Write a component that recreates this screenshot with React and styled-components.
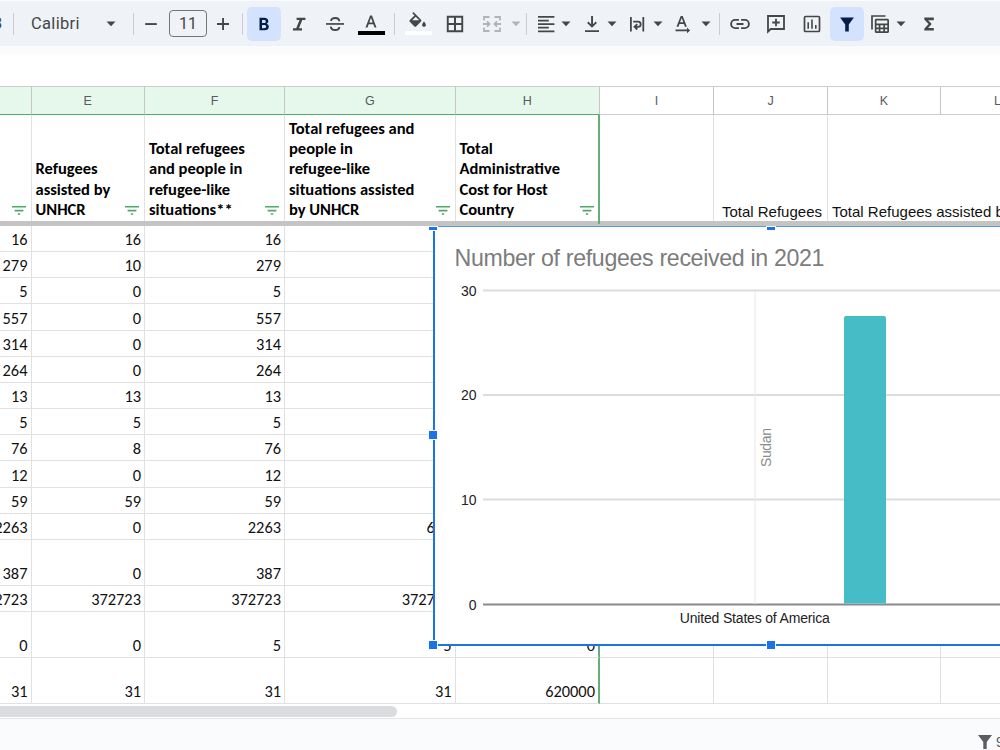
import styled, { createGlobalStyle } from 'styled-components';

const columns = [
  { name: '', width: 31.5, selected: true },
  { name: 'E', width: 113.5, selected: true, title: ['Refugees', 'assisted by', 'UNHCR'] },
  { name: 'F', width: 140, selected: true, title: ['Total refugees', 'and people in', 'refugee-like', 'situations**'] },
  { name: 'G', width: 170.5, selected: true, title: ['Total refugees and', 'people in', 'refugee-like', 'situations assisted', 'by UNHCR'] },
  { name: 'H', width: 144.5, selected: true, last: true, title: ['Total', 'Administrative', 'Cost for Host', 'Country'] },
  { name: 'I', width: 114 },
  { name: 'J', width: 114, text: 'Total Refugees', right: true },
  { name: 'K', width: 113, text: 'Total Refugees assisted by UNHCR', open: true },
  { name: 'L', width: 114 },
];

const SMALL = 26.1667;

const rows = [
  { height: SMALL, cells: ['16', '16', '16'] },
  { height: SMALL, cells: ['279', '10', '279'] },
  { height: SMALL, cells: ['5', '0', '5'] },
  { height: SMALL, cells: ['557', '0', '557'] },
  { height: SMALL, cells: ['314', '0', '314'] },
  { height: SMALL, cells: ['264', '0', '264'] },
  { height: SMALL, cells: ['13', '13', '13'] },
  { height: SMALL, cells: ['5', '5', '5'] },
  { height: SMALL, cells: ['76', '8', '76'] },
  { height: SMALL, cells: ['12', '0', '12'] },
  { height: SMALL, cells: ['59', '59', '59'] },
  { height: SMALL, cells: ['2263', '0', '2263', '600'] },
  { height: 46, cells: ['387', '0', '387'] },
  { height: 26, cells: ['372723', '372723', '372723', '372723'] },
  { height: 46, cells: ['0', '0', '5', '5', '0'] },
  { height: 46, cells: ['31', '31', '31', '31', '620000'] },
];

const ticks = [
  { label: '30', y: 64.5 },
  { label: '20', y: 169 },
  { label: '10', y: 273.5 },
  { label: '0', y: 378.5 },
];

function Caret ({ $muted }) {
  return (
    <CaretIcon $muted={$muted} width='10' height='6' viewBox='0 0 10 6'>
      <path d='M.5.5h9L5 5.3z' />
    </CaretIcon>
  );
}

function Toolbar () {
  return (
    <Bar>
      <Cut>3</Cut>
      <Divider />
      <FontSelect>
        <span>Calibri</span>
        <Caret />
      </FontSelect>
      <Divider />
      <Slot $width={34}>
        <Icon><path d='M6.2 11.1h11.6v1.9H6.2z' /></Icon>
      </Slot>
      <SizeBox>11</SizeBox>
      <Slot $width={32}>
        <Icon><path d='M6 11.1h5.1V6H13v5.1h5V13h-5v5h-1.9v-5H6z' /></Icon>
      </Slot>
      <Divider $after={4} $before={3} />

      <ActiveButton>
        <Icon><path d='M7.500 5.800h4.800c2.400 0 4 1.300 4 3.300 0 1.300-.7 2.200-1.700 2.700 1.300.4 2.200 1.500 2.200 2.900 0 2.300-1.800 3.600-4.300 3.600h-5zm2.500 2.100v3.100h2.100c1 0 1.700-.6 1.700-1.600s-.7-1.500-1.700-1.500zm0 5v3.300h2.300c1.200 0 1.900-.6 1.900-1.700 0-1-.8-1.600-1.900-1.600z' /></Icon>
      </ActiveButton>
      <Slot $width={36}>
        <Icon><path d='M9.600 5.700h8.800V8h-3.100l-3.300 8.300h3V18.600H6v-2.300h3.200L12.500 8H9.600z' /></Icon>
      </Slot>
      <Slot $width={35}>
        <Icon>
          <path d='M3 11.100h18v1.700H3z' />
          <path d='M16.200 9.300C16.200 7.300 14.500 6 12.100 6 9.800 6 8.100 7.200 8.100 8.900M7.800 14.600c.2 2.100 1.900 3.400 4.300 3.400 2.500 0 4.200-1.200 4.200-3.100' fill='none' stroke='currentColor' strokeWidth='1.900' />
        </Icon>
      </Slot>
      <Swatch $color='#000' $left={1}>
        <Icon><path d='M11.100 3.600h1.900l4.500 12h-2l-1.200-3.300H9.700L8.500 15.600h-2zm-.8 7h3.400L12 5.800z' /></Icon>
      </Swatch>
      <Divider $before={5} $after={5} />
      <Swatch $color='#fff'>
        <Icon>
          <path d='M7.500 0 6.300 1.200l2.200 2.200-4.700 4.700c-.5.5-.5 1.200 0 1.700l4.600 4.600c.5.5 1.200.5 1.700 0l4.900-4.900c.5-.5.5-1.200 0-1.700zM9.700 4.700l3.500 3.500H6.200zM18 9.500s-1.900 2.200-1.900 3.400c0 1 .9 1.800 1.900 1.800s1.900-.8 1.900-1.800c0-1.200-1.900-3.400-1.900-3.400z' />
        </Icon>
      </Swatch>
      <Slot $width={38}>
        <Icon><path d='M3.800 3.800v16.400h16.400V3.800zm7.200 14.500H5.700V13H11zm0-7.200H5.700V5.700H11zm7.300 7.200H13V13h5.300zm0-7.200H13V5.700h5.300z' /></Icon>
      </Slot>
      <Slot $width={35} $muted>
        <Icon>
          <path d='M9.500 5H4v3.500M9.500 19H4v-3.500M14.500 5H20v3.500M14.500 19H20v-3.500M3 12h6M21 12h-6M7 9.300 9.600 12 7 14.700M17 9.300 14.400 12l2.600 2.700' fill='none' stroke='currentColor' strokeWidth='1.800' />
        </Icon>
      </Slot>
      <CaretSlot $width={14}><Caret $muted /></CaretSlot>
      <Divider $before={3} $after={7} />

      <Slot $width={24}>
        <Icon><path d='M4 4h16.400v1.800H4zm0 3.700h10.800v1.700H4zm0 3.500h16.400V13H4zm0 3.600h10.800v1.700H4zm0 3.600h16.400v1.800H4z' /></Icon>
      </Slot>
      <CaretSlot $width={16}><Caret /></CaretSlot>
      <Slot $width={28} $left={4}>
        <Icon><path d='M11.100 4H13v8.300l2.700-2.700 1.200 1.300-4.900 4.900-4.900-4.900 1.300-1.300 2.700 2.700zM5 18.300h14v1.800H5z' /></Icon>
      </Slot>
      <CaretSlot $width={12}><Caret /></CaretSlot>
      <Slot $width={38}>
        <Icon>
          <path d='M5.900 5v14.500M18.300 5v14.500M8.200 9.600h4.900a2.500 2.500 0 0 1 0 5.200h-2.500M12.300 12.100l-2.800 2.700 2.800 2.700' fill='none' stroke='currentColor' strokeWidth='1.800' />
        </Icon>
      </Slot>
      <CaretSlot $width={3}><Caret /></CaretSlot>
      <Slot $width={46}>
        <Icon>
          <path d='M10.700 4h2l4.200 10.700h-2l-1-2.700H9.500l-1 2.700h-2zm-.6 6.300h3.200l-1.600-4.400z' />
          <path d='M5.500 17.500H17v-1.900l3.100 2.800-3.100 2.800v-1.900H5.500z' />
        </Icon>
      </Slot>
      <CaretSlot $width={1}><Caret /></CaretSlot>
      <Divider $before={13} $after={2} />

      <Slot $width={36}>
        <Icon>
          <path d='M10.900 7.900H7.200a4.100 4.100 0 0 0 0 8.200h3.700M13.100 7.900h3.700a4.100 4.100 0 0 1 0 8.200h-3.700M8.500 12h7' fill='none' stroke='currentColor' strokeWidth='1.900' />
        </Icon>
      </Slot>
      <Slot $width={36}>
        <Icon>
          <path d='M4 4h16v13H6.700L4 19.700z' fill='none' stroke='currentColor' strokeWidth='1.800' />
          <path d='M11.100 6.700h1.800v2.900h2.900v1.800h-2.900v2.900h-1.800v-2.900H8.200V9.600h2.900z' />
        </Icon>
      </Slot>
      <Slot $width={36}>
        <Icon>
          <rect x='4.500' y='4.500' width='15' height='15' rx='1' fill='none' stroke='currentColor' strokeWidth='1.700' />
          <path d='M7.400 10.200h1.600v6.500H7.400zM11.200 7.500h1.600v9.200h-1.600zM15 13h1.600v3.700H15z' />
        </Icon>
      </Slot>
      <ActiveButton>
        <Icon><path d='M5.100 5.500h13.800L13.800 12.500v7h-3.600v-7z' /></Icon>
      </ActiveButton>
      <Slot $width={31}>
        <Icon>
          <path d='M4 17.500V4h13.500' fill='none' stroke='currentColor' strokeWidth='1.700' />
          <path d='M8.300 6.700h11.200c.8 0 1.500.7 1.500 1.500v11.300c0 .8-.7 1.500-1.500 1.500H8.300c-.8 0-1.500-.7-1.500-1.500V8.200c0-.8.700-1.500 1.500-1.500zm.2 1.700v3.200h10.800V8.400zm0 4.900v2.200h2.200v-2.200zm3.900 0v2.200h2.900v-2.200zm4.600 0v2.200h2.300v-2.200zm-8.500 3.900v2.100h2.200v-2.100zm3.900 0v2.100h2.900v-2.100zm4.600 0v2.100h2.300v-2.100z' fillRule='evenodd' />
        </Icon>
      </Slot>
      <CaretSlot $width={12}><Caret /></CaretSlot>
      <Slot $width={44}>
        <Icon><path d='M7.300 5.500h9.500v2.700h-5.700l3.600 3.800-3.600 3.900h5.700v2.700H7.300v-1.900l4.300-4.700-4.300-4.600z' /></Icon>
      </Slot>
    </Bar>
  );
}

function FilterMark () {
  return (
    <Mark width='14' height='9' viewBox='0 0 14 9'>
      <path d='M0 0h14v1.600H0zM2.600 3.800h8.800v1.600H2.600zM5.800 7.300h2.400v1.400H5.800z' />
    </Mark>
  );
}

function Chart () {
  return (
    <ChartFrame>
      <svg width='567' height='416' viewBox='0 1 567 416'>
        <ChartTitle x='21.500' y='40' textLength='370'>Number of refugees received in 2021</ChartTitle>
        {ticks.map((tick) => (
          <g key={tick.label}>
            <TickLabel x='43.500' y={tick.y + 5} textAnchor='end'>{tick.label}</TickLabel>
            <line x1='50' x2='567' y1={tick.y} y2={tick.y} stroke={tick.label === '0' ? '#8a8a8a' : '#dcdcdc'} strokeWidth='1.800' />
          </g>
        ))}
        <line x1='322' x2='322' y1='65' y2='378' stroke='#ebebeb' strokeWidth='1.200' />
        <path d='M411 377.600V92a2 2 0 0 1 2-2h38a2 2 0 0 1 2 2v285.600z' fill='#46bcc7' />
        <Annotation x='-241' y='338' transform='rotate(-90)' textLength='39'>Sudan</Annotation>
        <TickLabel x='321.800' y='397' textAnchor='middle' textLength='150'>United States of America</TickLabel>
      </svg>
      <Handle $x={0} $y={0} $half />
      <Handle $x={338} $y={0} $half />
      <Handle $x={0} $y={209} />
      <Handle $x={0} $y={419} />
      <Handle $x={338} $y={419} />
    </ChartFrame>
  );
}

function App () {
  return (
    <Page>
      <GlobalStyle />
      <Toolbar />
      <FormulaBar />
      <Sheet>
        <Row $height={28}>
          {columns.map((col) => (
            <ColumnName key={col.name} $width={col.width} $selected={col.selected}>{col.name}</ColumnName>
          ))}
        </Row>
        <Row $height={106}>
          {columns.map((col) => (
            <TitleCell key={col.name} $width={col.width} $last={col.last} $right={col.right} $open={col.open}>
              {col.title && <Title>{col.title.map((line) => <span key={line}>{line}</span>)}</Title>}
              {col.text && <PlainText>{col.text}</PlainText>}
              {col.selected && <FilterMark />}
            </TitleCell>
          ))}
        </Row>
        <FreezeBar />
        {rows.map((row, i) => (
          <Row key={i} $height={row.height}>
            {columns.map((col, c) => (
              <Cell key={col.name} $width={col.width} $last={col.last}>{row.cells[c]}</Cell>
            ))}
          </Row>
        ))}
        <Chart />
      </Sheet>
      <ScrollTrack>
        <ScrollThumb />
      </ScrollTrack>
      <Footer>
        <FunnelIcon width='14' height='14' viewBox='0 0 14 14'>
          <path d='M0 0h14L8.700 7v7H5.300V7z' />
        </FunnelIcon>
        <span>97</span>
      </Footer>
    </Page>
  );
}

export default App;

const GlobalStyle = createGlobalStyle`
  * {
    box-sizing: border-box;
  }
  body {
    margin: 0;
    overflow: hidden;
    background: #f9fbfd;
  }
`;

const Page = styled.div`
  width: 1000px;
  height: 750px;
  overflow: hidden;
  display: flex;
  flex-direction: column;
  background: #f9fbfd;
  font-family: 'Liberation Sans', Arial, sans-serif;
`;

const Bar = styled.header`
  flex: none;
  height: 46px;
  border-top: 1px solid #f9fbfd;
  display: flex;
  align-items: center;
  background: #eff2f7;
  color: #444746;
  font-family: Roboto, sans-serif;
  font-weight: 500;
  font-size: 16px;
`;

const Cut = styled.span`
  width: 13px;
  display: flex;
  text-indent: -7px;
`;

const Divider = styled.i`
  flex: none;
  width: 1px;
  height: 22px;
  margin: 0 ${(p) => p.$after || 0}px 0 ${(p) => p.$before || 0}px;
  background: #c9ccd1;
`;

const FontSelect = styled.div`
  width: 119px;
  padding: 0 17px;
  display: flex;
  justify-content: space-between;
  align-items: center;
  font-weight: 400;
  font-size: 16.5px;
  letter-spacing: 0.3px;
`;

const Slot = styled.div`
  flex: none;
  width: ${(p) => p.$width}px;
  margin-left: ${(p) => p.$left || 0}px;
  height: 34px;
  display: flex;
  align-items: center;
  justify-content: center;
  color: ${(p) => (p.$muted ? '#b1b4b7' : 'inherit')};
`;

const CaretSlot = styled(Slot)`
  height: 20px;
`;

const ActiveButton = styled(Slot)`
  width: 34px;
  border-radius: 5px;
  background: #d3e3fd;
  color: #041e49;
`;

const Swatch = styled.div`
  flex: none;
  width: 36px;
  height: 24px;
  margin-left: ${(p) => p.$left || 0}px;
  display: flex;
  align-items: center;
  flex-direction: column;
  &::after {
    content: '';
    flex: none;
    width: 27px;
    height: 4px;
    margin-top: -5px;
    background: ${(p) => p.$color};
  }
`;

const Icon = styled.svg.attrs({ viewBox: '0 0 24 24' })`
  flex: none;
  width: 24px;
  height: 24px;
  fill: currentColor;
`;

const CaretIcon = styled.svg`
  flex: none;
  fill: ${(p) => (p.$muted ? '#b1b4b7' : '#444746')};
`;

const SizeBox = styled.div`
  width: 38px;
  height: 27px;
  margin-left: 1px;
  display: flex;
  align-items: center;
  justify-content: center;
  border: 1px solid #747775;
  border-radius: 4px;
  font-weight: 400;
`;

const FormulaBar = styled.div`
  flex: none;
  height: 41px;
  border-top: 8px solid #f9fbfd;
  border-bottom: 1px solid #cbcdcc;
  background: #fff;
`;

const Sheet = styled.main`
  position: relative;
  flex: none;
  height: 617px;
  background: #fff;
  border-bottom: 1px solid #dcdcdc;
`;

const Row = styled.div`
  display: flex;
  height: ${(p) => p.$height}px;
`;

const ColumnName = styled.div`
  flex: none;
  width: ${(p) => p.$width}px;
  display: flex;
  align-items: center;
  justify-content: center;
  border-right: 1px solid #c4c7c5;
  border-bottom: 1px solid ${(p) => (p.$selected ? '#4fae67' : '#cbcdcc')};
  background: ${(p) => (p.$selected ? '#e6f8eb' : '#fff')};
  color: #575b5f;
  font-size: 12.5px;
`;

const TitleCell = styled.div`
  position: relative;
  flex: none;
  width: ${(p) => p.$width}px;
  padding: 0 ${(p) => (p.$right ? 5 : 4)}px 1px 4px;
  display: flex;
  align-items: flex-end;
  justify-content: ${(p) => (p.$right ? 'flex-end' : 'space-between')};
  border-right: 1px solid ${(p) => (p.$open ? 'transparent' : '#e1e1e1')};
  &::after {
    content: '';
    display: ${(p) => (p.$last ? 'block' : 'none')};
    position: absolute;
    top: 0;
    right: -1px;
    bottom: -3px;
    width: 2px;
    background: #62b077;
  }
`;

const Title = styled.h2`
  margin: 0 0 1px;
  flex: none;
  display: flex;
  flex-direction: column;
  font-family: Carlito, Lato, sans-serif;
  font-size: 16.5px;
  font-weight: 700;
  line-height: 20.250px;
  white-space: nowrap;
  color: #000;
`;

const PlainText = styled.span`
  white-space: nowrap;
  font-size: 15px;
  line-height: 17px;
  color: #111;
`;

const Mark = styled.svg`
  flex: none;
  margin: 0 1px 5px auto;
  fill: #52a869;
`;

const FreezeBar = styled.div`
  height: 5px;
  background: #c4c4c4;
`;

const Cell = styled.div`
  flex: none;
  width: ${(p) => p.$width}px;
  padding: 0 3px 1px 0;
  overflow: hidden;
  display: flex;
  align-items: flex-end;
  justify-content: flex-end;
  border-right: ${(p) => (p.$last ? '2px solid #62b077' : '1px solid #e1e1e1')};
  border-bottom: 1px solid #e1e1e1;
  font-family: Carlito, Lato, sans-serif;
  font-size: 16.4px;
  line-height: 22px;
  color: #111;
`;

const ChartFrame = styled.section`
  position: absolute;
  top: 139px;
  left: 433px;
  width: 580px;
  height: 420px;
  background: #fff;
  border-left: 2px solid #1a73e8;
  border-top: 1px solid #5c97ea;
  border-bottom: 2px solid #1a73e8;
  svg {
    display: block;
    margin-left: -2px;
  }
`;

const ChartTitle = styled.text`
  font-family: 'Liberation Sans', Arial, sans-serif;
  font-size: 23.2px;
  fill: #7c7c7c;
`;

const TickLabel = styled.text`
  font-family: 'Liberation Sans', Arial, sans-serif;
  font-size: 14px;
  fill: #222;
`;

const Annotation = styled(TickLabel)`
  fill: #8a8a8a;
`;

const Handle = styled.i`
  position: absolute;
  left: ${(p) => p.$x - 6}px;
  top: ${(p) => p.$y - (p.$half ? 0 : 5)}px;
  width: 8px;
  height: ${(p) => (p.$half ? 3 : 8)}px;
  background: #1a73e8;
  box-shadow: 0 0 0 1px #fff;
`;

const ScrollTrack = styled.div`
  flex: none;
  height: 15px;
  padding-top: 2px;
  background: #fff;
  border-bottom: 1px solid #e3e6e8;
`;

const ScrollThumb = styled.div`
  width: 397px;
  height: 11px;
  border-radius: 0 6px 6px 0;
  background: #dadce0;
`;

const Footer = styled.footer`
  flex: 1;
  padding: 15px 0 0 978px;
  display: flex;
  gap: 4px;
  white-space: nowrap;
  color: #5a5d61;
  font-size: 14px;
`;

const FunnelIcon = styled.svg`
  flex: none;
  margin-top: 1px;
  fill: #5a5d61;
`;
